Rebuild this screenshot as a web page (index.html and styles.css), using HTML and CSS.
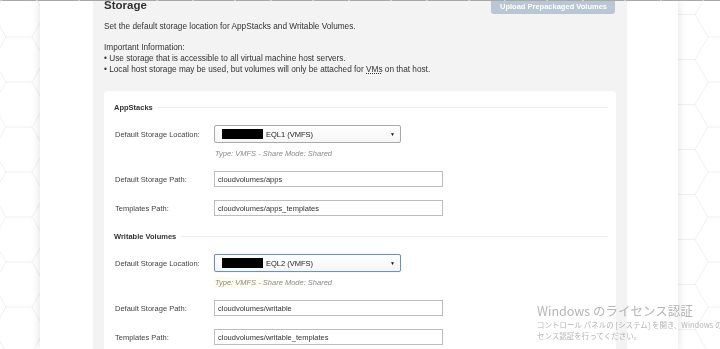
FILE: index.html
```html
<!DOCTYPE html>
<html lang="en">
<head>
    <meta charset="UTF-8">
    <title>Storage</title>
    <link rel="stylesheet" href="styles.css">
</head>
<body>
    <div class="hex-bg">
        <svg width="100%" height="100%">
            <defs>
                <pattern id="hex" width="78" height="45" patternUnits="userSpaceOnUse" x="-20" y="-8">
                    <path d="M65 22.5 L52 45 L26 45 L13 22.5 L26 0 L52 0 Z M0 22.5 L13 22.5 M65 22.5 L78 22.5" fill="none" stroke="#f0f0f0" stroke-width="1"/>
                </pattern>
            </defs>
            <rect width="100%" height="100%" fill="url(#hex)"/>
        </svg>
    </div>

    <div class="page">
        <div class="panel">
            <div class="panel-head">
                <h2>Storage</h2>
                <button class="upload-btn">Upload Prepackaged Volumes</button>
            </div>

            <p class="intro">Set the default storage location for AppStacks and Writable Volumes.</p>
            <p class="info">
                Important Information:<br>
                • Use storage that is accessible to all virtual machine host servers.<br>
                • Local host storage may be used, but volumes will only be attached for <abbr>VMs</abbr> on that host.
            </p>

            <div class="card">
                <div class="group">
                    <div class="legend"><span>AppStacks</span></div>
                    <div class="row">
                        <label>Default Storage Location:</label>
                        <div class="select">
                            <span class="redact"></span>
                            <span class="select-text">EQL1 (VMFS)</span>
                            <span class="arrow">▼</span>
                        </div>
                    </div>
                    <div class="hint">Type: VMFS - Share Mode: Shared</div>
                    <div class="row">
                        <label>Default Storage Path:</label>
                        <input class="text-input" type="text" value="cloudvolumes/apps">
                    </div>
                    <div class="row">
                        <label>Templates Path:</label>
                        <input class="text-input" type="text" value="cloudvolumes/apps_templates">
                    </div>
                </div>

                <div class="group">
                    <div class="legend"><span>Writable Volumes</span></div>
                    <div class="row">
                        <label>Default Storage Location:</label>
                        <div class="select focused">
                            <span class="redact"></span>
                            <span class="select-text">EQL2 (VMFS)</span>
                            <span class="arrow">▼</span>
                        </div>
                    </div>
                    <div class="hint hint-marked">Type: VMFS - Share Mode: Shared</div>
                    <div class="row">
                        <label>Default Storage Path:</label>
                        <input class="text-input" type="text" value="cloudvolumes/writable">
                    </div>
                    <div class="row">
                        <label>Templates Path:</label>
                        <input class="text-input" type="text" value="cloudvolumes/writable_templates">
                    </div>
                </div>
            </div>
        </div>
    </div>

    <div class="activation">
        <div class="activation-title">Windows のライセンス認証</div>
        <div class="activation-text">コントロール パネルの [システム] を開き、Windows の</div>
        <div class="activation-text">センス認証を行ってください。</div>
    </div>
</body>
</html>
```

FILE: styles.css
```css
:root {
    --panel-color: #f3f3f3;
    --text-color: #333;
    --label-color: #444;
    --hint-color: #8a8a8a;
    --line-color: #ececec;
}

* {
    margin: 0;
    padding: 0;
    box-sizing: border-box;
}

html, body {
    height: 100%;
}

body {
    font-family: 'Liberation Sans', Arial, sans-serif;
    font-size: 7.5px;
    color: var(--text-color);
    background-color: #fff;
    border-top: 1px solid #a8a8a8;
    overflow: hidden;
}

.hex-bg {
    position: fixed;
    top: 0;
    left: 0;
    width: 100%;
    height: 100%;
    z-index: 0;
}

.hex-bg svg {
    display: block;
}

.page {
    position: relative;
    z-index: 1;
    width: 638px;
    height: 100%;
    margin-left: 40px;
    padding: 0 51px 0 53px;
    background-color: #fff;
    box-shadow: 0 0 9px rgba(0, 0, 0, 0.13);
}

.panel {
    height: 100%;
    background-color: var(--panel-color);
    padding: 0 11px;
}

.panel-head {
    display: flex;
    justify-content: space-between;
    align-items: flex-start;
    height: 13px;
}

.panel-head h2 {
    font-size: 11.5px;
    line-height: 11px;
    font-weight: bold;
    color: #333;
    margin-top: -1px;
}

.upload-btn {
    font-family: inherit;
    font-size: 7.5px;
    font-weight: bold;
    color: #fff;
    background-color: #b9c7d5;
    border: none;
    border-radius: 3px;
    padding: 6px 8px 3px 9px;
    margin-top: -4px;
    margin-right: 1px;
    line-height: 8px;
}

.intro,
.info {
    font-size: 8.25px;
    line-height: 11px;
}

.intro {
    margin-top: 7px;
}

.info {
    margin-top: 10px;
}

abbr {
    text-decoration: underline dotted;
}

.card {
    margin-top: 16px;
    background-color: #fff;
    border-radius: 4px;
    padding: 11px 8px 20px 10px;
}

.group + .group {
    margin-top: 15px;
}

.legend {
    display: flex;
    align-items: center;
    font-weight: bold;
    line-height: 11px;
    color: #333;
    margin-bottom: 12px;
}

.legend::after {
    content: '';
    flex: 1;
    height: 1px;
    margin-left: 5px;
    background-color: var(--line-color);
}

.row {
    display: grid;
    grid-template-columns: 100px auto;
    align-items: center;
}

.row + .row {
    margin-top: 13px;
}

.row label {
    color: var(--label-color);
    padding-left: 1px;
}

.select {
    display: flex;
    align-items: center;
    width: 187px;
    height: 18px;
    border: 1px solid #a9a9a9;
    border-radius: 2px;
    background: linear-gradient(#fff, #f5f5f5);
    padding-left: 7px;
    color: #222;
}

.select.focused {
    border-color: #6f8fbf;
    box-shadow: 0 0 1px rgba(90, 120, 180, 0.5);
}

.redact {
    width: 41px;
    height: 10px;
    background-color: #000;
    margin-right: 3px;
}

.select-text {
    flex: 1;
}

.arrow {
    font-size: 5px;
    margin-right: 5px;
    color: #111;
}

.hint {
    font-style: italic;
    color: var(--hint-color);
    line-height: 11px;
    margin: 5px 0 12px 101px;
}

.hint-marked {
    background: linear-gradient(90deg, #fdfbe9, rgba(255, 255, 255, 0) 60%);
    width: 150px;
}

.text-input {
    width: 229px;
    height: 16px;
    border: 1px solid #bdbdbd;
    font-family: inherit;
    font-size: 7.5px;
    color: #333;
    padding: 0 3px;
    outline: none;
}

.activation {
    position: fixed;
    left: 537px;
    top: 303px;
    z-index: 2;
    white-space: nowrap;
    font-family: 'Noto Sans CJK JP', 'Noto Sans', sans-serif;
    color: rgba(150, 150, 150, 0.7);
}

.activation-title {
    font-size: 12.5px;
    line-height: 16px;
}

.activation-text {
    font-size: 7.5px;
    line-height: 11px;
}
```
